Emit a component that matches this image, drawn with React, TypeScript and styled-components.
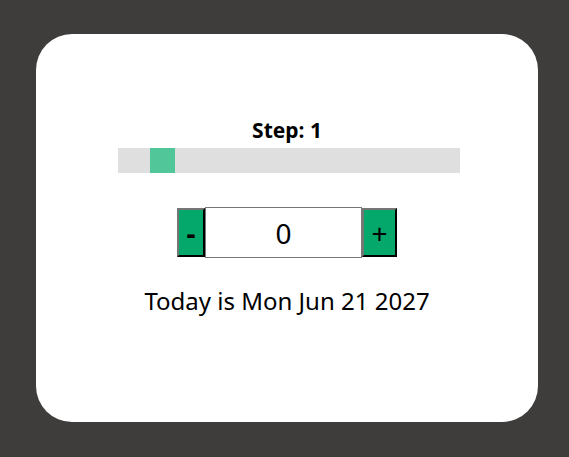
import React, {useState} from 'react';
import styled, {createGlobalStyle} from 'styled-components';

const GlobalStyle = createGlobalStyle`
    body {
        margin: 0;
        background: #3f3d3b;
        font-family: "Noto Sans", "Open Sans", sans-serif;
    }
`;

const Page = styled.div`
    padding: 34px 31px 35px 36px;
`;

const Card = styled.div`
    height: 388px;
    background: #ffffff;
    border-radius: 36px;
    display: flex;
    flex-direction: column;
    align-items: center;
    padding-top: 82px;
    box-sizing: border-box;
`;

const StepLabel = styled.div`
    font-size: 21px;
    font-weight: 700;
    line-height: 28px;
    color: #000;
    margin-bottom: 4px;
`;

const Track = styled.div`
    width: 342px;
    height: 25px;
    margin-left: 4px;
    background: #dfdfdf;
    position: relative;
`;

const Thumb = styled.div`
    position: absolute;
    top: 0;
    width: 25px;
    height: 25px;
    background: #50c699;
`;

const Counter = styled.div`
    display: flex;
    align-items: center;
    margin-top: 34px;
`;

const StepButton = styled.button<{ $wide?: boolean }>`
    width: ${p => (p.$wide ? 35 : 28)}px;
    height: 49px;
    padding: 0;
    background: #05a86b;
    border: 2px solid;
    border-color: #767676 #000 #000 #767676;
    font-family: "Noto Sans", sans-serif;
    font-size: 28px;
    font-weight: ${p => (p.$wide ? 400 : 700)};
    line-height: 1;
    color: #000;
    cursor: pointer;
`;

const Value = styled.input`
    width: 157px;
    height: 51px;
    box-sizing: border-box;
    border: 1px solid #767676;
    text-align: center;
    font-family: "Noto Sans", sans-serif;
    font-size: 28px;
    color: #000;
    outline: none;
`;

const DateLine = styled.div`
    margin-top: 27px;
    font-size: 24px;
    line-height: 32px;
    color: #000;
`;

export default function App() {
    const [step] = useState(1);
    const [count, setCount] = useState(0);

    return (
        <Page>
            <GlobalStyle/>
            <Card>
                <StepLabel>Step: {step}</StepLabel>
                <Track>
                    <Thumb style={{left: step * 32}}/>
                </Track>
                <Counter>
                    <StepButton onClick={() => setCount(count - step)}>-</StepButton>
                    <Value value={count} readOnly/>
                    <StepButton $wide onClick={() => setCount(count + step)}>+</StepButton>
                </Counter>
                <DateLine>Today is Mon Jun 21 2027</DateLine>
            </Card>
        </Page>
    );
}
